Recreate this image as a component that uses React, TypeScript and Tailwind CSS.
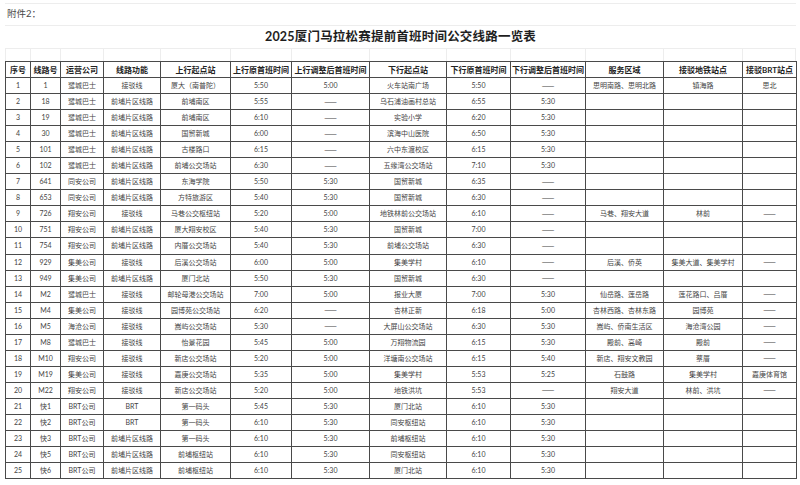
import React from "react";

const headers = [
  "序号",
  "线路号",
  "运营公司",
  "线路功能",
  "上行起点站",
  "上行原首班时间",
  "上行调整后首班时间",
  "下行起点站",
  "下行原首班时间",
  "下行调整后首班时间",
  "服务区域",
  "接驳地铁站点",
  "接驳BRT站点",
];

const D = "——";

const rows: string[][] = [
  ["1", "1", "鹭城巴士", "接驳线", "厦大（南普陀）", "5:50", "5:00", "火车站南广场", "5:50", D, "思明南路、思明北路", "镇海路", "思北"],
  ["2", "18", "鹭城巴士", "前埔片区线路", "前埔南区", "5:55", D, "乌石浦油画村总站", "6:55", "5:30", "", "", ""],
  ["3", "19", "鹭城巴士", "前埔片区线路", "前埔南区", "6:10", D, "实验小学", "6:20", "5:30", "", "", ""],
  ["4", "30", "鹭城巴士", "前埔片区线路", "国贸新城", "6:00", D, "滨海中山医院", "6:50", "5:30", "", "", ""],
  ["5", "101", "鹭城巴士", "前埔片区线路", "古楼路口", "6:15", D, "六中东渡校区", "6:15", "5:30", "", "", ""],
  ["6", "102", "鹭城巴士", "前埔片区线路", "前埔公交场站", "6:30", D, "五缘湾公交场站", "7:10", "5:30", "", "", ""],
  ["7", "641", "同安公司", "前埔片区线路", "东海学院", "5:50", "5:30", "国贸新城", "6:35", D, "", "", ""],
  ["8", "653", "同安公司", "前埔片区线路", "方特旅游区", "5:40", "5:30", "国贸新城", "6:30", D, "", "", ""],
  ["9", "726", "翔安公司", "接驳线", "马巷公交枢纽站", "5:20", "5:00", "地铁林前公交场站", "6:10", D, "马巷、翔安大道", "林前", D],
  ["10", "751", "翔安公司", "前埔片区线路", "厦大翔安校区", "5:40", "5:30", "国贸新城", "7:00", D, "", "", ""],
  ["11", "754", "翔安公司", "前埔片区线路", "内厝公交场站", "5:40", "5:30", "前埔公交场站", "6:30", D, "", "", ""],
  ["12", "929", "集美公司", "接驳线", "后溪公交场站", "6:00", "5:00", "集美学村", "6:10", D, "后溪、侨英", "集美大道、集美学村", D],
  ["13", "949", "集美公司", "前埔片区线路", "厦门北站", "5:50", "5:30", "国贸新城", "6:30", D, "", "", ""],
  ["14", "M2", "鹭城巴士", "接驳线", "邮轮母港公交场站", "7:00", "5:00", "报业大厦", "7:00", "5:30", "仙岳路、莲岳路", "莲花路口、吕厝", D],
  ["15", "M4", "集美公司", "接驳线", "园博苑公交场站", "6:20", D, "杏林正新", "6:18", "5:00", "杏林西路、杏林东路", "园博苑", D],
  ["16", "M5", "海沧公司", "接驳线", "嵩屿公交场站", "5:30", D, "大屏山公交场站", "6:30", "5:30", "嵩屿、侨南生活区", "海沧湾公园", D],
  ["17", "M8", "鹭城巴士", "接驳线", "怡景花园", "5:45", "5:00", "万翔物流园", "6:15", "5:30", "殿前、高崎", "殿前", D],
  ["18", "M10", "翔安公司", "接驳线", "新店公交场站", "5:20", "5:00", "洋塘南公交场站", "6:15", "5:40", "新店、翔安文教园", "蔡厝", D],
  ["19", "M19", "集美公司", "接驳线", "嘉庚公交场站", "5:35", "5:00", "集美学村", "5:53", "5:25", "石鼓路", "集美学村", "嘉庚体育馆"],
  ["20", "M22", "翔安公司", "接驳线", "新店公交场站", "5:20", "5:00", "地铁洪坑", "5:53", D, "翔安大道", "林前、洪坑", D],
  ["21", "快1", "BRT公司", "BRT", "第一码头", "5:45", "5:30", "厦门北站", "6:10", "5:30", "", "", ""],
  ["22", "快2", "BRT公司", "BRT", "第一码头", "6:10", "5:30", "同安枢纽站", "6:10", "5:30", "", "", ""],
  ["23", "快3", "BRT公司", "前埔片区线路", "第一码头", "6:10", "5:30", "前埔枢纽站", "6:10", "5:30", "", "", ""],
  ["24", "快5", "BRT公司", "前埔片区线路", "前埔枢纽站", "6:10", "5:30", "同安枢纽站", "6:10", "5:30", "", "", ""],
  ["25", "快6", "BRT公司", "前埔片区线路", "前埔枢纽站", "6:10", "5:30", "厦门北站", "6:10", "5:30", "", "", ""],
];

const font = {
  fontFamily: '"Lato", "Noto Sans CJK SC", sans-serif',
};

export default function App() {
  return (
    <div className="w-[800px] h-[485px] bg-white overflow-hidden" style={font}>
      <div className="pt-[3px] ml-[5px] w-[791px]">
        <div className="h-[22px] border-t border-[#ededed] flex items-center pl-[2px] text-[9.5px] text-[#4a4a4a]">
          附件2：
        </div>
        <div className="h-[23px] border-t border-[#ededed] flex items-center justify-center text-[12.5px] font-bold text-[#1e1e1e] tracking-[0.2px]">
          2025厦门马拉松赛提前首班时间公交线路一览表
        </div>
        <div className="h-[13px] border-t border-[#ededed] grid grid-cols-[25px_30px_43px_57px_70px_61px_78px_77px_64px_75px_78px_79px_54px]">
          {headers.map((h, i) => (
            <div
              key={h}
              className={
                i === headers.length - 1
                  ? "border-l border-r border-[#ededed]"
                  : "border-l border-[#ededed]"
              }
            />
          ))}
        </div>
        <table className="table-fixed border-collapse w-[791px]">
          <colgroup>
            <col className="w-[25px]" />
            <col className="w-[30px]" />
            <col className="w-[43px]" />
            <col className="w-[57px]" />
            <col className="w-[70px]" />
            <col className="w-[61px]" />
            <col className="w-[78px]" />
            <col className="w-[77px]" />
            <col className="w-[64px]" />
            <col className="w-[75px]" />
            <col className="w-[78px]" />
            <col className="w-[79px]" />
            <col className="w-[54px]" />
          </colgroup>
          <thead>
            <tr className="h-[16px]">
              {headers.map((h) => (
                <th
                  key={h}
                  className="border border-[#4a4a4a] p-0 text-center align-middle whitespace-nowrap text-[8px] leading-none font-bold text-[#222]"
                >
                  {h}
                </th>
              ))}
            </tr>
          </thead>
          <tbody>
            {rows.map((r) => (
              <tr key={r[0]} className="h-[16.05px]">
                {r.map((c, j) => (
                  <td
                    key={j}
                    className="border border-[#4a4a4a] p-0 text-center align-middle whitespace-nowrap text-[7px] leading-none text-[#444]"
                  >
                    {c === D ? (
                      <span className="font-['Noto_Sans_CJK_SC',sans-serif] text-[7.5px]">{c}</span>
                    ) : (
                      c
                    )}
                  </td>
                ))}
              </tr>
            ))}
          </tbody>
        </table>
      </div>
    </div>
  );
}
